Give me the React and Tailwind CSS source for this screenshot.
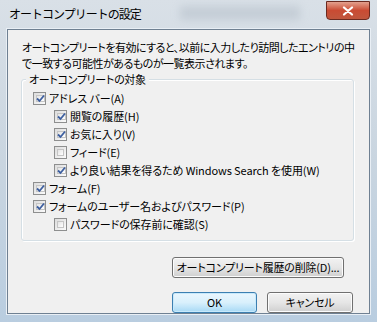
import React from 'react';

const font = "font-['Noto_Sans_CJK_JP','Noto_Sans',sans-serif]";
const palt = "[font-feature-settings:'palt']";

const Check = ({ checked }) => (
    <span className="w-[13px] h-[13px] shrink-0 border border-[#8e8f8f] bg-gradient-to-br from-[#dcdcdc] to-[#fbfbfb] p-[2px] flex">
        <span className="flex-1 bg-gradient-to-br from-[#e4e4e4] to-[#ffffff] border border-[#c5c5c5] flex items-center justify-center">
            {checked && (
                <svg width="9" height="9" viewBox="0 0 9 9" className="-m-[1px]">
                    <path d="M1 4.5 L3.5 7 L8 1.5" fill="none" stroke="#3d5fa0" strokeWidth="1.8" />
                </svg>
            )}
        </span>
    </span>
);

const Row = ({ checked, indent, children }) => (
    <div className={`flex items-center gap-[3px] h-[18px] ${indent ? 'pl-[32px]' : 'pl-[11px]'}`}>
        <Check checked={checked} />
        <span className="text-[11px] leading-[14px] tracking-[-0.1px] text-black whitespace-nowrap">{children}</span>
    </div>
);

const Button = ({ children, primary, className = '' }) => (
    <button
        className={`h-[21px] rounded-[3px] border text-[11px] leading-none tracking-[-0.2px] whitespace-nowrap text-black ${
            primary
                ? 'border-[#3c7fb1] bg-gradient-to-b from-[#eaf6fd] via-[#d9f0fc] to-[#a7d9f5] shadow-[inset_0_0_0_1px_#c8e9fb]'
                : 'border-[#707070] bg-gradient-to-b from-[#f2f2f2] via-[#e6e6e6] to-[#cfcfcf] shadow-[inset_0_0_0_1px_#fcfcfc]'
        } ${className}`}
    >
        {children}
    </button>
);

export default function App() {
    return (
        <div className={`w-[377px] h-[322px] overflow-hidden flex flex-col bg-gradient-to-b from-[#d9e0e7] via-[#c9d5e0] to-[#b9cde0] ${font}`}>
            {/* title bar */}
            <div className="h-[29px] shrink-0 flex items-start pl-[9px] pr-[7px] relative">
                <span className="mt-[6px] text-[12px] leading-[16px] tracking-[-1px] text-black whitespace-nowrap">オートコンプリートの設定</span>
                <div className="absolute left-[180px] top-[6px] w-[120px] h-[14px] bg-[#b8c2cc] blur-[4px] opacity-60" />
                <button className="ml-auto w-[44px] h-[19px] mt-[1px] rounded-b-[4px] border border-[#6b2a20] bg-gradient-to-b from-[#e3a08e] via-[#c94b33] to-[#c0563d] flex items-center justify-center relative">
                    <svg width="12" height="10" viewBox="0 0 12 10">
                        <path d="M2 1.5 L10 8.5 M10 1.5 L2 8.5" stroke="#fff" strokeWidth="2.2" strokeLinecap="round" />
                    </svg>
                </button>
            </div>

            {/* client area */}
            <div className={`flex-1 flex px-[7px] pb-[8px] ${palt}`}>
                <div className="flex-1 flex flex-col border border-[#6f8092] bg-[#f0f0f0] shadow-[0_0_0_1px_#e9eff5]">
                    <p className="pl-[14px] pt-[9px] text-[11px] leading-[16px] tracking-[-0.5px] text-black whitespace-nowrap">
                        オートコンプリートを有効にすると、以前に入力したり訪問したエントリの中<br />
                        で一致する可能性があるものが一覧表示されます。
                    </p>

                    <div className="relative mt-[8px] ml-[13px] mr-[15px] h-[162px] rounded-[3px] border border-[#d5dfe5] shadow-[inset_1px_1px_0_#ffffff,1px_1px_0_#ffffff]">
                        <span className="absolute -top-[9px] left-[4px] px-[3px] bg-[#f0f0f0] text-[11px] leading-[16px] tracking-[-0.3px] text-black whitespace-nowrap">
                            オートコンプリートの対象
                        </span>
                        <div className="pt-[9px] flex flex-col">
                            <Row checked>アドレス バー(A)</Row>
                            <Row checked indent>閲覧の履歴(H)</Row>
                            <Row checked indent>お気に入り(V)</Row>
                            <Row indent>フィード(E)</Row>
                            <Row checked indent>より良い結果を得るため Windows Search を使用(W)</Row>
                            <Row checked>フォーム(F)</Row>
                            <Row checked>フォームのユーザー名およびパスワード(P)</Row>
                            <Row indent>パスワードの保存前に確認(S)</Row>
                        </div>
                    </div>

                    <div className="mt-[12px] pl-[164px]">
                        <Button className="w-[172px]">オートコンプリート履歴の削除(D)...</Button>
                    </div>

                    <div className="mt-[14px] pl-[164px] flex gap-[10px]">
                        <Button primary className="w-[85px]">OK</Button>
                        <Button className="w-[86px]">キャンセル</Button>
                    </div>
                </div>
            </div>
        </div>
    );
}
